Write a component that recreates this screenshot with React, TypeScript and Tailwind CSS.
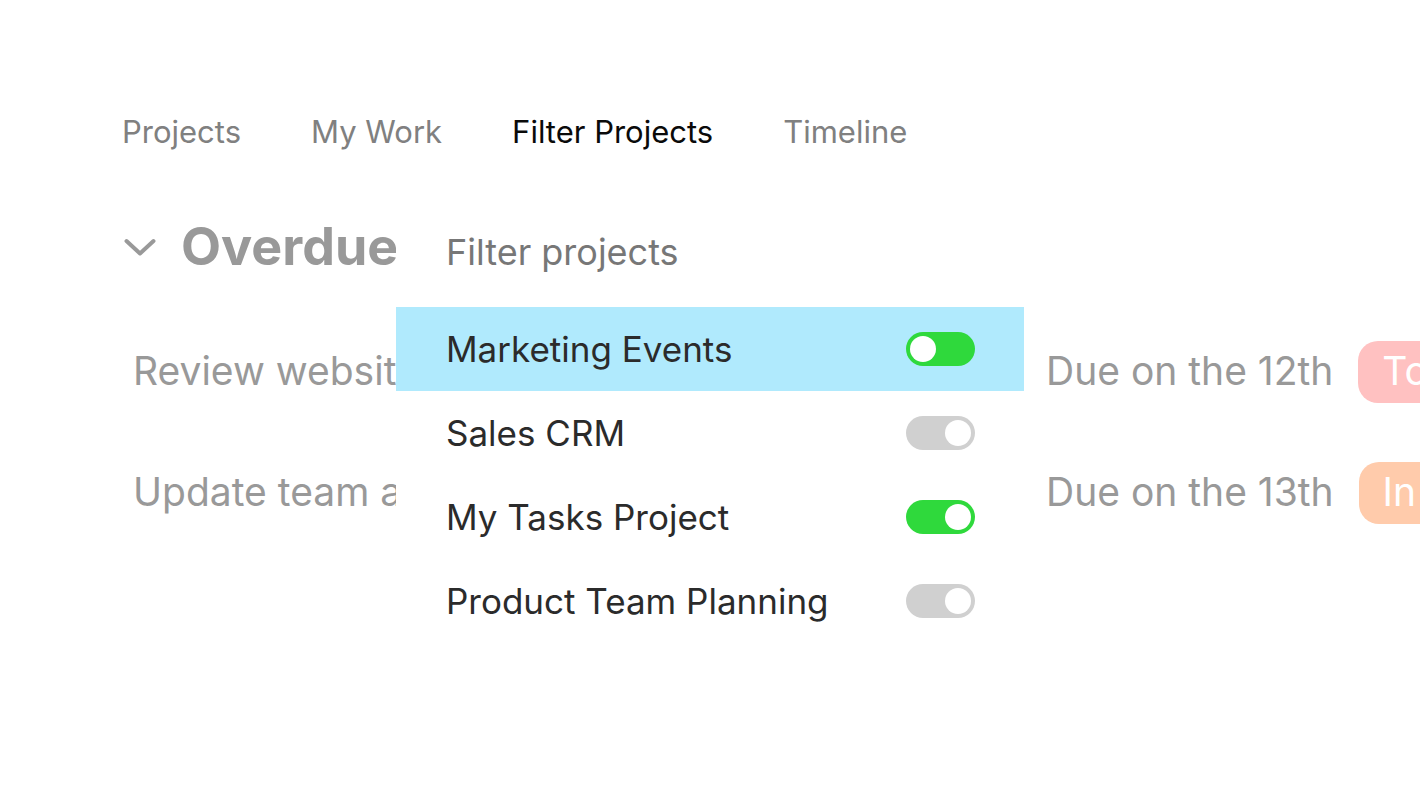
import React from 'react';

const TABS = [
  { label: 'Projects', active: false },
  { label: 'My Work', active: false },
  { label: 'Filter Projects', active: true },
  { label: 'Timeline', active: false },
];

const TASKS = [
  { title: 'Review website copy', due: 'Due on the 12th', status: 'To Do', pill: 'bg-[#ffc1c1]' },
  { title: 'Update team agenda', due: 'Due on the 13th', status: 'In Progress', pill: 'bg-[#ffcbab]' },
];

const FILTERS = [
  { name: 'Marketing Events', on: true, knobRight: false, highlighted: true },
  { name: 'Sales CRM', on: false, knobRight: true, highlighted: false },
  { name: 'My Tasks Project', on: true, knobRight: true, highlighted: false },
  { name: 'Product Team Planning', on: false, knobRight: true, highlighted: false },
];

const Toggle: React.FC<{ on: boolean; knobRight: boolean }> = ({ on, knobRight }) => (
  <div
    className={`w-[69px] h-[34px] rounded-full p-[4px] flex items-center ${on ? 'bg-[#2fd93c]' : 'bg-[#d0d0d0]'} ${knobRight ? 'justify-end' : 'justify-start'}`}
  >
    <div className="w-[26px] h-[26px] rounded-full bg-white" />
  </div>
);

const App: React.FC = () => {
  return (
    <div className="relative w-full h-[800px] overflow-hidden bg-white font-['Inter',sans-serif]">
      <nav className="flex gap-[70px] pl-[122px] pt-[113px]">
        {TABS.map((tab) => (
          <span
            key={tab.label}
            className={`text-[31px] leading-[38px] ${tab.active ? 'text-[#0a0a0a]' : 'text-[#808080]'}`}
          >
            {tab.label}
          </span>
        ))}
      </nav>

      <section className="mt-[64px]">
        <div className="flex items-center gap-[25px] pl-[124px] h-[64px]">
          <svg width="32" height="22" viewBox="0 0 32 22" fill="none">
            <path d="M2.5 5 L16 17.5 L29.5 5" stroke="#999999" strokeWidth="4" strokeLinecap="round" strokeLinejoin="round" />
          </svg>
          <h2 className="text-[52px] leading-[64px] font-bold text-[#999999]">Overdue</h2>
        </div>

        <div className="mt-[32px]">
          {TASKS.map((task) => (
            <div key={task.title} className="flex items-center h-[121px] pl-[133px]">
              {/* the filter panel hides the rest of the title */}
              <div className="w-[913px] shrink-0">
                <span className="block w-[263px] overflow-hidden text-[39px] text-[#999999] whitespace-nowrap">
                  {task.title}
                </span>
              </div>
              <span className="shrink-0 text-[39px] text-[#999999] whitespace-nowrap">{task.due}</span>
              <span className={`ml-[25px] shrink-0 h-[62px] px-[24px] flex items-center rounded-[20px] text-[39px] text-white whitespace-nowrap ${task.pill}`}>
                {task.status}
              </span>
            </div>
          ))}
        </div>
      </section>

      <div className="absolute left-[396px] top-[212px] w-[628px] bg-white pb-[30px]">
        <div className="pl-[50px] h-[95px] pb-[16px] flex items-center text-[36px] text-[#777777]">Filter projects</div>
        {FILTERS.map((f) => (
          <div
            key={f.name}
            className={`flex items-center justify-between h-[84px] pl-[50px] pr-[49px] ${f.highlighted ? 'bg-[#b0eafd]' : ''}`}
          >
            <span className="text-[35px] text-[#2b2b2b]">{f.name}</span>
            <Toggle on={f.on} knobRight={f.knobRight} />
          </div>
        ))}
      </div>
    </div>
  );
};

export default App;
